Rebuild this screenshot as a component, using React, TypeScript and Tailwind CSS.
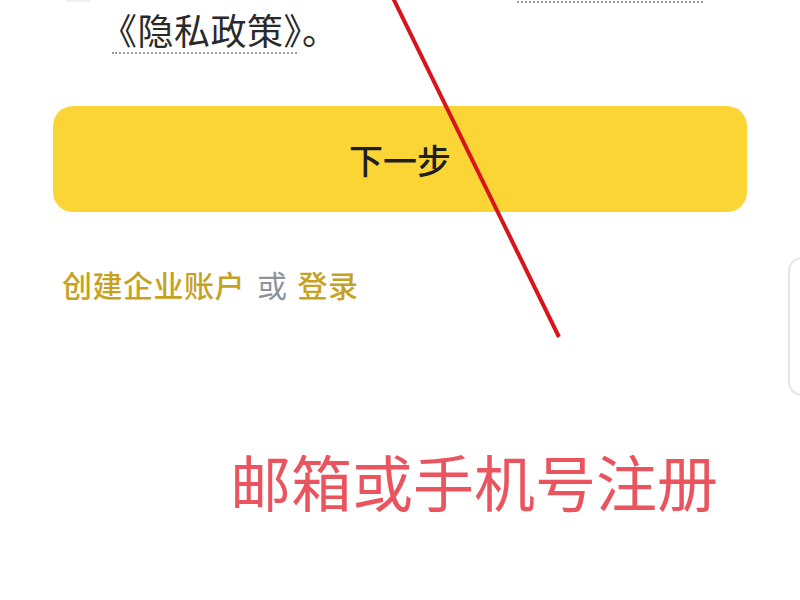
import React from "react";

export default function App() {
  const cjk = { fontFamily: '"Noto Sans CJK SC", "Noto Sans", sans-serif' };
  return (
    <div className="relative w-[800px] h-[600px] overflow-hidden bg-white" style={cjk}>
      {/* top right dotted line */}
      <div className="absolute left-[517px] top-[1px] w-[186px] border-t-[2px] border-dotted border-[#9a9a9a]" />
      <div className="absolute left-[66px] top-0 w-[24px] h-[2px] bg-[#f0f0f0]" />

      <div className="flex flex-col pt-[7px]">
        <div className="pl-[101px]">
          <div className="inline-flex flex-col">
            <span className="text-[36px] leading-[44px] tracking-[0.5px] text-[#2a2a2a]">《隐私政策》。</span>
          </div>
          <div className="ml-[11px] mt-[1px] w-[185px] border-t-[2px] border-dotted border-[#9a9a9a]" />
        </div>

        <div className="mx-[53px] mt-[52px] h-[106px] rounded-[20px] bg-[#fbd536] flex items-center justify-center">
          <span className="text-[34px] font-medium text-[#1f1f1f]">下一步</span>
        </div>

        <div className="ml-[62px] mt-[52px] flex items-center text-[30px] leading-[40px] font-medium tracking-[0.5px]">
          <span className="text-[#c6a223]">创建企业账户</span>
          <span className="text-[#8e939b] font-normal ml-[12px] mr-[10px]">或</span>
          <span className="text-[#c6a223]">登录</span>
        </div>

        <div className="ml-[230px] mt-[142px] text-[61px] leading-[70px] text-[#e9545f]">
          邮箱或手机号注册
        </div>
      </div>

      {/* right edge rounded outline */}
      <div className="absolute left-[788px] top-[257px] w-[40px] h-[139px] rounded-[14px] border-[2px] border-[#e6e6e6]" />

      {/* red annotation line */}
      <svg className="absolute left-0 top-0" width="800" height="600">
        <line x1="393" y1="-2" x2="559" y2="337" stroke="#d8141c" strokeWidth="4" />
      </svg>
    </div>
  );
}
